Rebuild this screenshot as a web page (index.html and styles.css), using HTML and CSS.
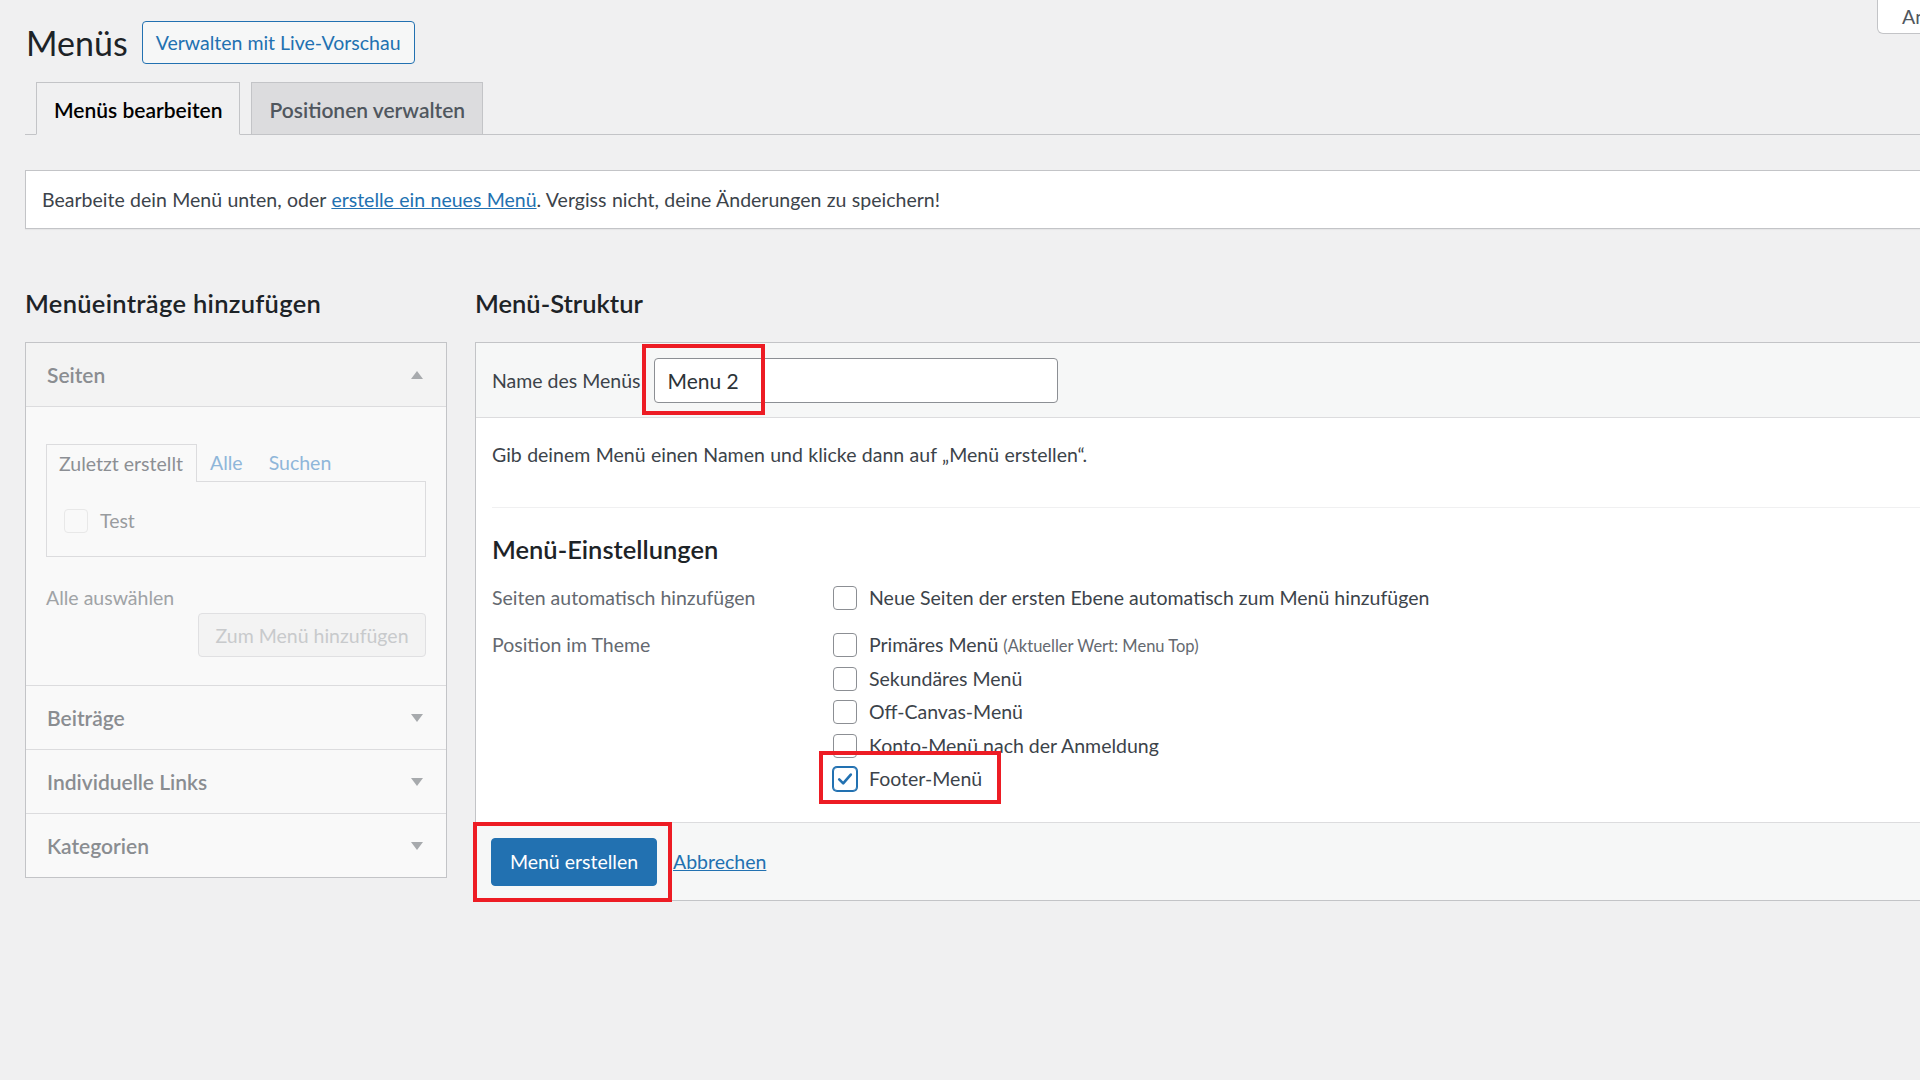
FILE: index.html
```html
<!DOCTYPE html>
<html lang="de">
<head>
<meta charset="utf-8">
<title>Menüs</title>
<link rel="stylesheet" href="styles.css">
</head>
<body>
<div class="screen-meta"><button class="screen-options" type="button">Ansicht anpassen</button></div>
<div class="wrap">
  <div class="title-row">
    <h1>Menüs</h1>
    <a class="btn-secondary" href="#">Verwalten mit Live-Vorschau</a>
  </div>
  <nav class="nav-tabs">
    <a class="nav-tab active" href="#">Menüs bearbeiten</a>
    <a class="nav-tab" href="#">Positionen verwalten</a>
  </nav>
  <div class="notice"><p>Bearbeite dein Menü unten, oder <a href="#">erstelle ein neues Menü</a>. Vergiss nicht, deine Änderungen zu speichern!</p></div>

  <div class="columns">
    <div class="col-left">
      <h2 class="h-left">Menüeinträge hinzufügen</h2>
      <div class="accordion">
        <div class="acc-section">
          <div class="acc-title"><span>Seiten</span><svg class="arrow" width="12" height="8" viewBox="0 0 12 8"><polygon points="0,8 12,8 6,0"/></svg></div>
          <div class="acc-content">
            <div class="mini-tabs">
              <span class="mini-tab active">Zuletzt erstellt</span>
              <span class="mini-tab link">Alle</span>
              <span class="mini-tab link">Suchen</span>
            </div>
            <div class="mini-panel"><span class="cb faded"></span><span>Test</span></div>
            <div class="select-all">Alle auswählen</div>
            <div class="add-row"><button class="btn-disabled" type="button">Zum Menü hinzufügen</button></div>
          </div>
        </div>
        <div class="acc-section">
          <div class="acc-title"><span>Beiträge</span><svg class="arrow" width="12" height="8" viewBox="0 0 12 8"><polygon points="0,0 12,0 6,8"/></svg></div>
        </div>
        <div class="acc-section">
          <div class="acc-title"><span>Individuelle Links</span><svg class="arrow" width="12" height="8" viewBox="0 0 12 8"><polygon points="0,0 12,0 6,8"/></svg></div>
        </div>
        <div class="acc-section last">
          <div class="acc-title"><span>Kategorien</span><svg class="arrow" width="12" height="8" viewBox="0 0 12 8"><polygon points="0,0 12,0 6,8"/></svg></div>
        </div>
      </div>
    </div>

    <div class="col-right">
      <h2>Menü-Struktur</h2>
      <div class="menu-box">
        <div class="menu-header">
          <label class="name-label" for="menu-name">Name des Menüs</label>
          <div class="name-field">
            <input id="menu-name" class="name-input" type="text" value="Menu 2">
            <span class="mark mark-name"></span>
          </div>
        </div>
        <div class="menu-body">
          <p class="instructions">Gib deinem Menü einen Namen und klicke dann auf „Menü erstellen“.</p>
          <hr class="sep">
          <h3>Menü-Einstellungen</h3>
          <div class="settings">
            <div class="set-label">Seiten automatisch hinzufügen</div>
            <div class="set-fields">
              <div class="opt"><span class="cb"></span><span>Neue Seiten der ersten Ebene automatisch zum Menü hinzufügen</span></div>
            </div>
            <div class="set-label">Position im Theme</div>
            <div class="set-fields">
              <div class="opt"><span class="cb"></span><span>Primäres Menü <small class="current">(Aktueller Wert: Menu Top)</small></span></div>
              <div class="opt"><span class="cb"></span><span>Sekundäres Menü</span></div>
              <div class="opt"><span class="cb"></span><span>Off-Canvas-Menü</span></div>
              <div class="opt"><span class="cb"></span><span>Konto-Menü nach der Anmeldung</span></div>
              <div class="opt marked"><span class="cb checked"><svg width="20" height="20" viewBox="0 0 20 20"><path d="M4.2 10.4 L8.2 14.4 L15.8 5.6" fill="none" stroke="#2271b1" stroke-width="2.6" stroke-linecap="round" stroke-linejoin="round"/></svg></span><span>Footer-Menü</span><span class="mark mark-footer"></span></div>
            </div>
          </div>
        </div>
        <div class="menu-footer">
          <button class="btn-primary" type="button">Menü erstellen</button>
          <a class="cancel" href="#">Abbrechen</a>
          <span class="mark mark-button"></span>
        </div>
      </div>
    </div>
  </div>
</div>
</body>
</html>
```
FILE: styles.css
```css
* { box-sizing: border-box; }
html, body { margin: 0; padding: 0; }
body {
  background: #f0f0f1;
  font-family: Lato, "Noto Sans", sans-serif;
  font-size: 19.5px;
  color: #3c434a;
  width: 1920px;
  height: 1080px;
  overflow: hidden;
  position: relative;
}
a { color: #2271b1; }

.screen-meta { position: absolute; top: 0; left: 1877px; }
.screen-options {
  height: 34px;
  padding: 0 24px;
  background: #fff;
  border: 1px solid #c3c4c7;
  border-top: 0;
  border-radius: 0 0 6px 6px;
  font: inherit;
  color: #50575e;
  white-space: nowrap;
  line-height: 30px;
}

.wrap { width: 2300px; padding: 21px 0 0 25px; }

.title-row { display: flex; align-items: center; gap: 14px; height: 43px; }
h1 { margin: 0; padding-left: 1px; font-size: 34px; font-weight: 400; color: #1d2327; line-height: 43px; }
.btn-secondary {
  display: inline-flex; align-items: center;
  height: 43px; padding: 0 13px;
  border: 1px solid #2271b1; border-radius: 4px;
  background: #f6f7f7; color: #2271b1; text-decoration: none;
}

.nav-tabs {
  display: flex; gap: 11px;
  margin-top: 18px; padding-left: 11px;
  height: 53px;
  border-bottom: 1px solid #c3c4c7;
}
.nav-tab {
  display: flex; align-items: center;
  height: 53px; margin-bottom: -1px;
  padding: 1px 17px 0;
  border: 1px solid #c3c4c7;
  background: #dcdcde; color: #50575e;
  font-size: 21px; font-weight: 600; text-decoration: none;
}
.nav-tab.active { background: #f0f0f1; color: #000; border-bottom-color: #f0f0f1; }

.notice {
  margin-top: 35px; height: 59px;
  display: flex; align-items: center;
  padding: 0 16px;
  background: #fff; border: 1px solid #c3c4c7;
  box-shadow: 0 1px 1px rgba(0,0,0,.04);
}
.notice p { margin: 0; word-spacing: 0.4px; }

.columns { display: flex; align-items: flex-start; }
.col-left { width: 422px; flex: none; }
.col-right { flex: 1; margin-left: 28px; }
h2 { margin: 57px 0 22px; font-size: 25.5px; font-weight: 600; line-height: 34px; color: #1d2327; }
.h-left { letter-spacing: 0.3px; }

/* left (disabled) accordion */
.accordion { border: 1px solid #c3c4c7; background: #f9f9f9; }
.acc-section { border-bottom: 1px solid #dcdcde; }
.acc-section.last { border-bottom: 0; }
.acc-title {
  height: 63px; display: flex; align-items: center; justify-content: space-between;
  padding: 0 23px 0 21px;
  font-size: 21px; font-weight: 600; color: #8a8d91;
  background: #f9f9f9;
}
.acc-section:first-child .acc-title { background: #f3f3f3; border-bottom: 1px solid #dcdcde; height: 64px; }
.arrow { fill: #a7aaad; }
.acc-content { padding: 37px 20px 28px; background: #f9f9f9; }
.mini-tabs { display: flex; height: 37px; }
.mini-tab { display: flex; align-items: center; padding: 0 13px; color: #8c8f94; }
.mini-tab.active {
  padding: 0 13px 0 12px;
  border: 1px solid #dcdcde; border-bottom: 0;
  background: #f9f9f9; height: 38px; margin-bottom: -1px; position: relative;
}
.mini-tab.link { color: #8fb6d9; }
.mini-panel {
  height: 76px; border: 1px solid #dcdcde;
  display: flex; align-items: center; gap: 12px;
  padding: 3px 0 0 17px; color: #999c9f;
}
.select-all { margin-top: 27px; line-height: 28px; color: #a0a3a6; }
.add-row { display: flex; justify-content: flex-end; margin-top: 1px; }
.btn-disabled {
  width: 228px; height: 44px;
  border: 1px solid #e0e0e2; border-radius: 4px;
  background: #f3f3f3; color: #c8cacc;
  font: inherit;
}

/* checkboxes */
.cb {
  width: 24px; height: 24px; flex: none;
  border: 1px solid #8c8f94; border-radius: 4px; background: #fff;
  display: inline-flex; align-items: center; justify-content: center;
}
.cb.faded { border-color: #e8e8e8; background: #f9f9f9; }
.cb.checked { border-color: #2271b1; box-shadow: 0 0 0 1px #2271b1; }

/* right box */
.menu-box { border: 1px solid #c3c4c7; background: #fff; }
.menu-header {
  height: 75px; display: flex; align-items: center; gap: 13px;
  padding-left: 16px;
  background: #f6f7f7; border-bottom: 1px solid #dcdcde;
}
.name-field { position: relative; }
.name-input {
  display: block; width: 404px; height: 45px;
  padding: 0 13px;
  border: 1px solid #8c8f94; border-radius: 4px;
  background: #fff; color: #2c3338;
  font: inherit; font-size: 21px;
}
.mark { position: absolute; border: 4px solid #ed1c24; pointer-events: none; }
.mark-name { left: -12px; top: -14px; width: 123px; height: 71px; }

.menu-body { padding: 23px 0 31px 16px; }
.instructions { margin: 0; line-height: 28px; word-spacing: 0.4px; }
.sep { margin: 38px 0 0; border: 0; border-top: 1px solid #f0f0f1; height: 0; }
h3 { margin: 24px 0 20px; font-size: 25.5px; font-weight: 600; line-height: 34px; color: #1d2327; }

.settings { display: grid; grid-template-columns: 341px 1fr; row-gap: 23px; }
.set-label { color: #646970; line-height: 24px; }
.set-fields { display: flex; flex-direction: column; gap: 9.5px; }
.opt { display: flex; align-items: center; gap: 12px; height: 24px; line-height: 24px; }
.opt.marked { position: relative; }
.current { font-size: 16.5px; color: #646970; }
.mark-footer { left: -14px; top: -16px; width: 182px; height: 53px; }

.menu-footer {
  position: relative;
  height: 78px; display: flex; align-items: center; gap: 16px;
  padding-left: 15px;
  background: #f6f7f7; border-top: 1px solid #dcdcde;
}
.btn-primary {
  width: 166px; height: 48px;
  border: 1px solid #2271b1; border-radius: 4px;
  background: #2271b1; color: #fff;
  font: inherit;
}
.cancel { color: #2271b1; text-decoration: underline; }
.mark-button { left: -3px; top: -1px; width: 199px; height: 80px; }
```
